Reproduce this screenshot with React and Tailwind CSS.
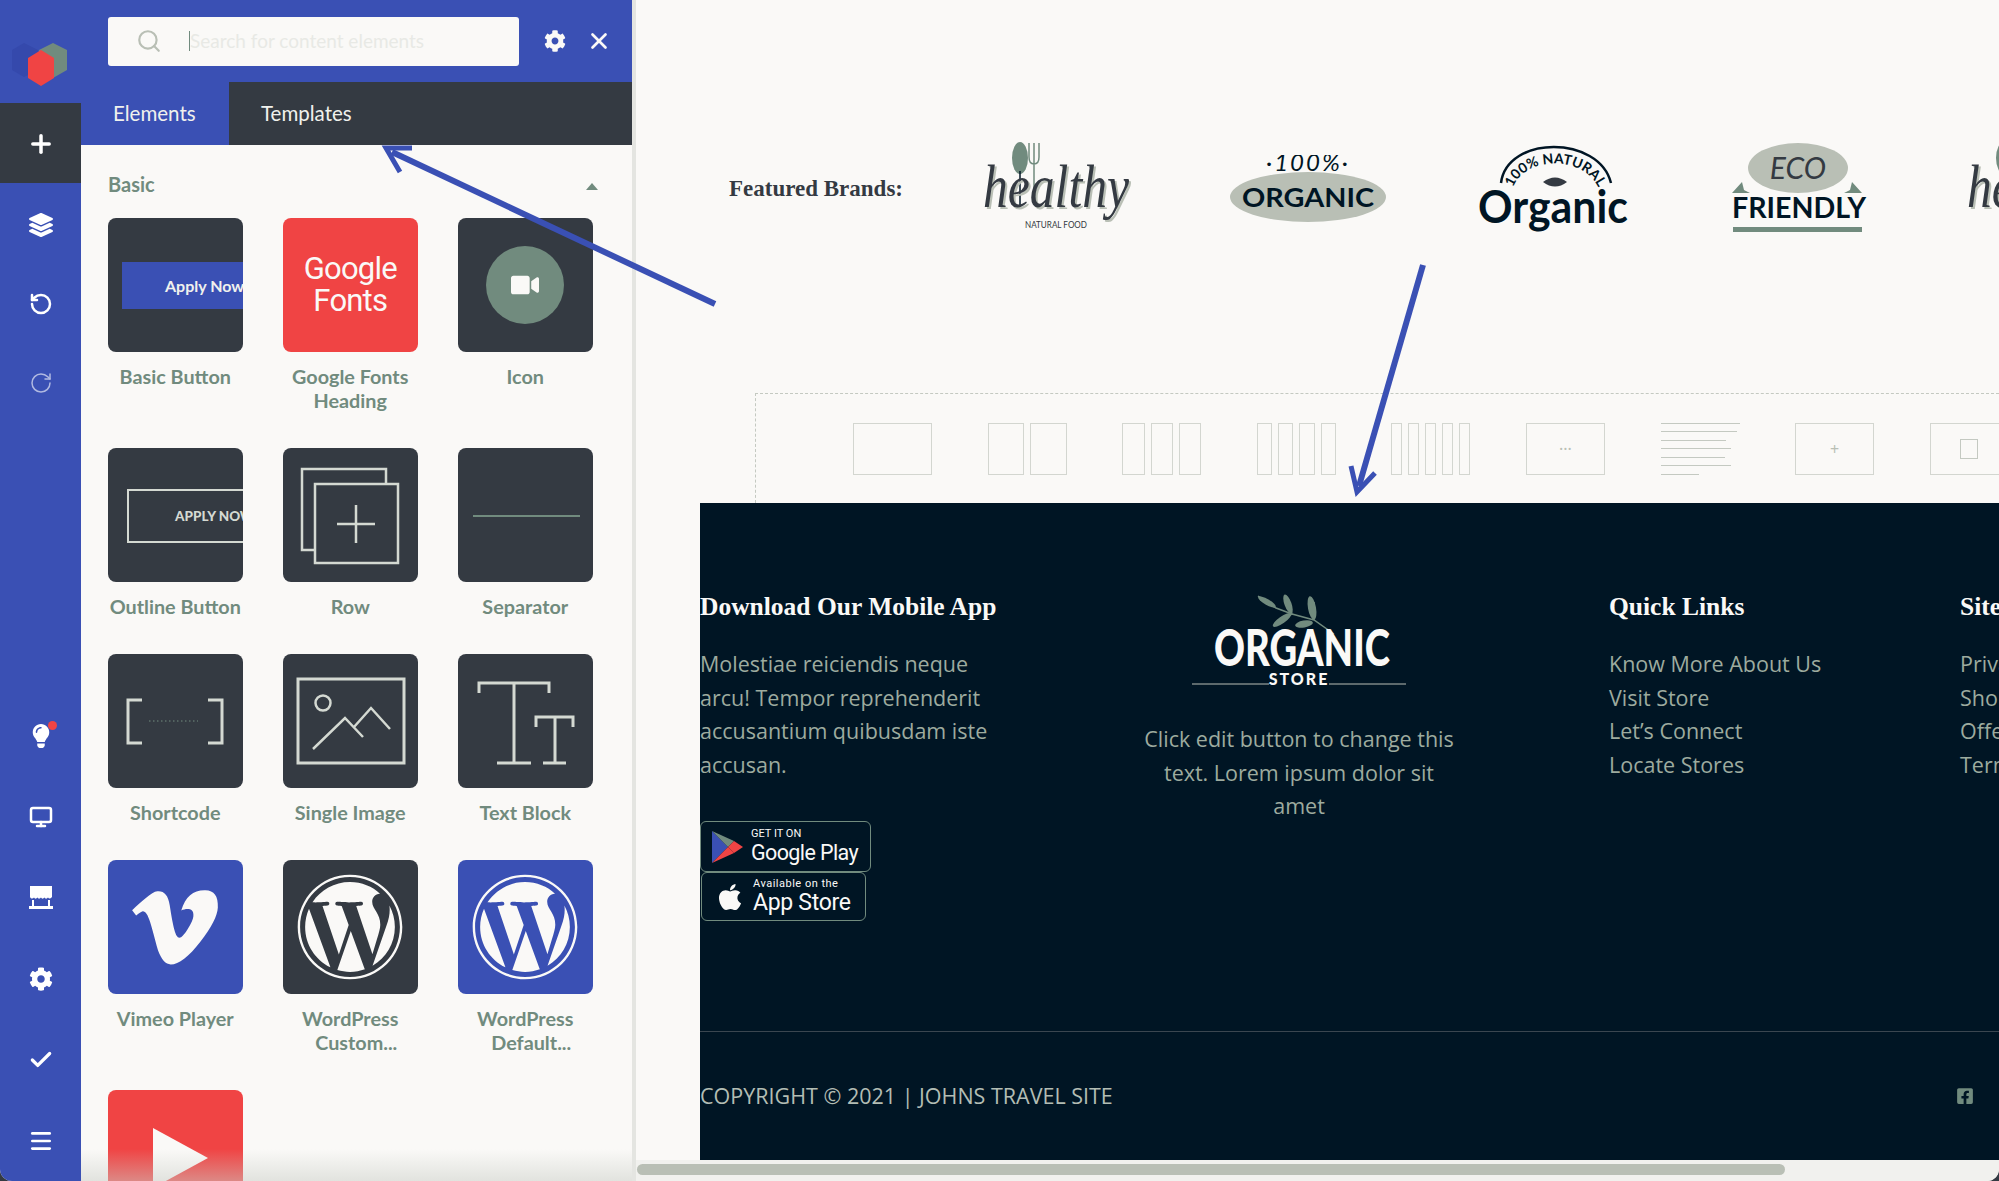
import React from 'react';
import { Plus, RotateCcw, RotateCw, Monitor, Check, Menu, Search, X } from 'lucide-react';
import { FaCog, FaLayerGroup, FaVideo, FaVimeoV, FaWordpress, FaApple, FaFacebookSquare, FaLightbulb } from 'react-icons/fa';

const Store = () => (
    <svg width="24" height="24" viewBox="0 0 24 24" fill="#ffffff">
        <path d="M1 0h22v11c-2 2-3 2-4 .5-1 1.500-3 1.500-3.500 0-1 1.500-3 1.500-3.500 0-1 1.500-3 1.500-3.500 0-1 1.500-3 1.500-3.500 0-1 1.500-3 1.500-4-.5z" />
        <rect x="3" y="14" width="2" height="6" />
        <rect x="19" y="14" width="2" height="6" />
        <rect x="0" y="20" width="24" height="3" />
    </svg>
);

const Logo = () => (
    <svg width="60" height="46" viewBox="0 0 60 46" className="mt-[41px] ml-[10px]">
        <path d="M14 2l14 7v20l-14 7-12-7V9z" fill="#3549ac" />
        <path d="M43 2l14 7v20l-14 8-14-8V9z" fill="#718b7e" />
        <path d="M31 9l13 8v20l-13 8-13-8V17z" fill="#f04444" />
    </svg>
);

const Tile = ({ bg = 'bg-[#343a42]', children }) => (
    <div className={`w-[134.5px] h-[134px] rounded-lg overflow-hidden relative flex items-center justify-center ${bg}`}>
        {children}
    </div>
);

const Draw = ({ children }) => (
    <svg width="135" height="134" viewBox="0 0 135 134" fill="none" stroke="#d4d9d2" strokeWidth="2.500" className="shrink-0">
        {children}
    </svg>
);

const tiles = [
    {
        label: ['Basic Button'],
        node: (
            <Tile>
                <div className="absolute left-[14px] top-[44px] w-[121px] h-[47px] bg-[#3a50b4] flex items-center pl-[43px] whitespace-nowrap text-[#f0f1ed] text-[16px] font-bold">
                    Apply Now
                </div>
            </Tile>
        ),
    },
    {
        label: ['Google Fonts', 'Heading'],
        node: (
            <Tile bg="bg-[#f04444]">
                <div className="text-[#faf9f7] text-center font-['Roboto'] text-[31px] leading-[32px] tracking-[-0.8px]">
                    Google
                    <br />
                    Fonts
                </div>
            </Tile>
        ),
    },
    {
        label: ['Icon'],
        node: (
            <Tile>
                <div className="w-[78px] h-[78px] rounded-full bg-[#718b7e] flex items-center justify-center">
                    <FaVideo size={28} color="#faf9f7" />
                </div>
            </Tile>
        ),
    },
    {
        label: ['Outline Button'],
        node: (
            <Tile>
                <div className="absolute left-[19px] top-[41px] w-[120px] h-[54px] border-2 border-[#d4d9d2] flex items-center pl-[46px] whitespace-nowrap text-[#d4d9d2] text-[13.500px] font-black">
                    APPLY NOW
                </div>
            </Tile>
        ),
    },
    {
        label: ['Row'],
        node: (
            <Tile>
                <Draw>
                    <path d="M31 102H19V21h84v15" />
                    <rect x="32" y="36" width="83" height="79" />
                    <path d="M73 57v38M54 76h38" />
                </Draw>
            </Tile>
        ),
    },
    {
        label: ['Separator'],
        node: (
            <Tile>
                <Draw>
                    <path d="M15 68h107" stroke="#718b7e" strokeWidth="2" />
                </Draw>
            </Tile>
        ),
    },
    {
        label: ['Shortcode'],
        node: (
            <Tile>
                <Draw>
                    <path d="M34 46H20v43h14M100 46h14v43h-14" strokeWidth="3" />
                    <path d="M41 67h49" strokeWidth="1" strokeDasharray="1.500 2.500" stroke="#718b7e" />
                </Draw>
            </Tile>
        ),
    },
    {
        label: ['Single Image'],
        node: (
            <Tile>
                <Draw>
                    <rect x="15" y="25" width="106" height="84" strokeWidth="3" />
                    <circle cx="40" cy="49" r="7.500" />
                    <path d="M30 95l32-31 18 19M71 73l17-19 19 21" />
                </Draw>
            </Tile>
        ),
    },
    {
        label: ['Text Block'],
        node: (
            <Tile>
                <Draw>
                    <path d="M21 39V29h70v10M56 29v80M39 109h34M78 73V63h37v10M97 63v46M85 109h23" strokeWidth="3" />
                </Draw>
            </Tile>
        ),
    },
    {
        label: ['Vimeo Player'],
        node: (
            <Tile bg="bg-[#3a50b4]">
                <FaVimeoV size={98} color="#faf9f7" />
            </Tile>
        ),
    },
    {
        label: ['WordPress', 'Custom...'],
        indent: true,
        node: (
            <Tile>
                <FaWordpress size={108} color="#faf9f7" />
            </Tile>
        ),
    },
    {
        label: ['WordPress', 'Default...'],
        indent: true,
        node: (
            <Tile bg="bg-[#3a50b4]">
                <FaWordpress size={108} color="#faf9f7" />
            </Tile>
        ),
    },
    {
        label: [],
        node: (
            <Tile bg="bg-[#f04444]">
                <svg width="135" height="134" viewBox="0 0 135 134" className="shrink-0">
                    <path d="M45 38l55 30-55 30z" fill="#faf9f7" />
                </svg>
            </Tile>
        ),
    },
];

const Sidebar = () => (
    <div className="w-[81px] h-full bg-[#3a50b4] flex flex-col text-white shrink-0">
        <div className="h-[103px]">
            <Logo />
        </div>
        <div className="h-[80px] pt-[1px] bg-[#343a42] flex items-center justify-center">
            <Plus size={28} strokeWidth={3} />
        </div>
        <div className="h-[80px] pt-[3px] flex items-center justify-center">
            <FaLayerGroup size={24} />
        </div>
        <div className="h-[80px] pt-[2px] flex items-center justify-center">
            <RotateCcw size={24} strokeWidth={2.5} />
        </div>
        <div className="h-[80px] flex items-center justify-center">
            <RotateCw size={24} strokeWidth={1.5} className="opacity-60" />
        </div>
        <div className="mt-auto flex flex-col">
            <div className="h-[81px] flex items-center justify-center relative">
                <FaLightbulb size={24} />
                <span className="absolute left-[48px] top-[26px] w-[9px] h-[9px] rounded-full bg-[#f04444]"></span>
            </div>
            <div className="h-[81px] flex items-center justify-center">
                <Monitor size={24} strokeWidth={2.5} />
            </div>
            <div className="h-[81px] flex items-center justify-center">
                <Store />
            </div>
            <div className="h-[81px] flex items-center justify-center">
                <FaCog size={24} />
            </div>
            <div className="h-[81px] flex items-center justify-center">
                <Check size={26} strokeWidth={3} />
            </div>
            <div className="h-[81px] flex items-center justify-center">
                <Menu size={26} strokeWidth={2.5} />
            </div>
        </div>
    </div>
);

const Panel = () => (
    <div className="w-[636px] h-full flex shrink-0 border-r-4 border-[#e4e5e1] font-['Lato']">
        <Sidebar />
        <div className="flex-1 flex flex-col min-w-0">
            <div className="h-[82px] bg-[#3a50b4] flex items-center pl-[27px] shrink-0">
                <div className="w-[411px] h-[49px] bg-[#faf9f7] rounded-[3px] flex items-center pl-[28px]">
                    <Search size={26} strokeWidth={2} color="#b9bfb5" />
                    <span className="ml-[27px] h-[20px] w-px bg-[#718b7e]"></span>
                    <span className="text-[19px] text-[#e8e9e5]">Search for content elements</span>
                </div>
                <FaCog size={22} color="#faf9f7" className="ml-[25px]" />
                <X size={26} strokeWidth={2.5} color="#faf9f7" className="ml-[20px]" />
            </div>
            <div className="h-[63px] flex shrink-0 bg-[#343a42] text-[20.500px] text-[#f0f1ed]">
                <div className="w-[148px] bg-[#3a50b4] flex items-center pl-[32px]">Elements</div>
                <div className="flex items-center pl-[32px]">Templates</div>
            </div>
            <div className="flex-1 relative overflow-hidden bg-[#faf9f7] pl-[27px] pt-[27px]">
                <div className="flex items-center justify-between w-[497px] h-[24px] mb-[22px] pr-[7px]">
                    <span className="text-[20px] font-bold text-[#718b7e]">Basic</span>
                    <span className="w-0 h-0 border-x-[6px] border-x-transparent border-b-[7px] border-b-[#718b7e] mt-1"></span>
                </div>
                <div className="grid grid-cols-[134.5px_134.5px_134.5px] gap-x-[40.500px] gap-y-[36px]">
                    {tiles.map((tile, i) => (
                        <div key={i}>
                            {tile.node}
                            <div className="mt-[12px] text-center text-[19.800px] leading-[24px] font-bold text-[#718b7e] whitespace-nowrap">
                                {tile.label.map((line, n) => (
                                    <div key={n} className={tile.indent && n === 1 ? 'pl-[12px]' : ''}>{line}</div>
                                ))}
                            </div>
                        </div>
                    ))}
                </div>
                <div className="absolute left-0 right-0 bottom-0 h-[32px] bg-gradient-to-b from-[#faf9f7]/0 to-[#c9cdc6]/50"></div>
            </div>
        </div>
    </div>
);

const Healthy = () => (
    <svg width="160" height="96" viewBox="0 0 160 96" fill="none" className="shrink-0">
        <ellipse cx="38" cy="17" rx="8" ry="16" fill="#718b7e" />
        <path d="M38 30v36" stroke="#001524" strokeWidth="1.500" />
        <path d="M47 2v14q0 7 5 7t5-7V2M52 2v60" stroke="#718b7e" strokeWidth="1.500" />
        <text x="3" y="68" fontFamily="Liberation Serif" fontStyle="italic" fontSize="62" fill="#b9bfb5" textLength="146" lengthAdjust="spacingAndGlyphs">healthy</text>
        <text x="1" y="66" fontFamily="Liberation Serif" fontStyle="italic" fontSize="62" fill="#343a42" textLength="146" lengthAdjust="spacingAndGlyphs">healthy</text>
        <text x="43" y="87" fontFamily="Lato" fontSize="9" fill="#343a42" textLength="62" lengthAdjust="spacingAndGlyphs">NATURAL FOOD</text>
    </svg>
);

const Pill = () => (
    <svg width="160" height="68" viewBox="0 0 160 68" className="shrink-0">
        <ellipse cx="80" cy="42" rx="78" ry="25" fill="#b9bfb5" />
        <text x="80" y="16" textAnchor="middle" fontFamily="Lato" fontStyle="italic" fontSize="24" letterSpacing="2" fill="#001524">·100%·</text>
        <text x="80" y="52" textAnchor="middle" fontFamily="Lato" fontWeight="700" fontSize="27" fill="#001524" textLength="132" lengthAdjust="spacingAndGlyphs">ORGANIC</text>
    </svg>
);

const Natural = () => (
    <svg width="154" height="88" viewBox="0 0 154 88" fill="none" className="shrink-0">
        <path d="M24 38C30 -10 122 -10 134 38" stroke="#001524" strokeWidth="2.500" />
        <path id="natArc" d="M34 50C40 8 114 8 124 50" />
        <text fontFamily="Lato" fontWeight="700" fontSize="14" fill="#001524" textAnchor="middle">
            <textPath href="#natArc" startOffset="50%">100% NATURAL</textPath>
        </text>
        <path d="M66 37q12-9 24 0q-12 9-24 0z" fill="#343a42" />
        <text x="76" y="78" textAnchor="middle" fontFamily="Lato" fontWeight="700" fontSize="46" fill="#001524" textLength="150" lengthAdjust="spacingAndGlyphs">Organic</text>
    </svg>
);

const Eco = () => (
    <svg width="136" height="92" viewBox="0 0 136 92" className="shrink-0">
        <ellipse cx="66" cy="25" rx="50" ry="25" fill="#b9bfb5" />
        <path d="M0 50l10-11 2 8 6 3zM130 50l-10-11-2 8-6 3z" fill="#718b7e" />
        <text x="66" y="36" textAnchor="middle" fontFamily="Lato" fontStyle="italic" fontSize="30" fill="#343a42">ECO</text>
        <text x="67" y="75" textAnchor="middle" fontFamily="Lato" fontWeight="700" fontSize="29" fill="#001524" textLength="134" lengthAdjust="spacingAndGlyphs">FRIENDLY</text>
        <rect x="1" y="84" width="129" height="5" fill="#718b7e" />
    </svg>
);

const Cols = ({ n }) => (
    <div className="w-[79px] h-[52px] flex gap-[6px] shrink-0">
        {Array.from({ length: n }).map((_, i) => (
            <div key={i} className="flex-1 border border-[#d3d6d0]"></div>
        ))}
    </div>
);

const BoxIcon = ({ children }) => (
    <div className="w-[79px] h-[52px] border border-[#d3d6d0] flex items-center justify-center shrink-0 text-[#b9bfb5] text-[16px] leading-none">
        {children}
    </div>
);

const TextLines = () => (
    <div className="w-[79px] h-[52px] flex flex-col justify-between shrink-0">
        {[79, 76, 65, 70, 64, 70, 38].map((w, i) => (
            <div key={i} className="h-px bg-[#c4c9c1]" style={{ width: w }}></div>
        ))}
    </div>
);

const DropArea = () => (
    <div className="ml-[55px] h-[110px] border-l border-t border-dashed border-[#c4c9c1] flex items-center gap-[55.600px] pl-[97px] overflow-hidden">
        <Cols n={1} />
        <Cols n={2} />
        <Cols n={3} />
        <Cols n={4} />
        <Cols n={5} />
        <BoxIcon>···</BoxIcon>
        <TextLines />
        <BoxIcon>+</BoxIcon>
        <BoxIcon>
            <div className="w-[18px] h-[20px] border border-[#c4c9c1]"></div>
        </BoxIcon>
    </div>
);

const PlayBadge = () => (
    <div className="w-[171px] h-[51px] border border-[#718b7e] rounded-[6px] flex items-center pl-[10px] bg-[#001524]">
        <svg width="32" height="34" viewBox="0 0 32 34">
            <path d="M1 1v32l16-16z" fill="#3a50b4" />
            <path d="M1 1l16 16 6-6z" fill="#718b7e" />
            <path d="M1 33l16-16 6 6z" fill="#f04444" />
            <path d="M23 11l9 6-9 6-6-6z" fill="#f04444" />
        </svg>
        <div className="ml-[8px] text-[#faf9f7] font-['Roboto']">
            <div className="text-[11px] leading-[12px]">GET IT ON</div>
            <div className="text-[21.500px] leading-[25px] tracking-[-0.6px]">Google Play</div>
        </div>
    </div>
);

const AppBadge = () => (
    <div className="w-[165px] h-[49px] ml-px border border-[#718b7e] rounded-[6px] flex items-center pl-[13px] bg-[#001524]">
        <FaApple size={30} color="#faf9f7" />
        <div className="ml-[8px] text-[#faf9f7] font-['Roboto']">
            <div className="text-[11px] leading-[12px] tracking-[0.5px]">Available on the</div>
            <div className="text-[23px] leading-[26px] tracking-[-0.3px]">App Store</div>
        </div>
    </div>
);

const StoreLogo = () => (
    <svg width="214" height="100" viewBox="0 0 214 100" fill="none">
        <path d="M66 6l18 12 16 6 22 6 20 14M100 24L96 8M122 30V12M100 24l-18 12" stroke="#718b7e" strokeWidth="1.500" />
        <ellipse cx="75" cy="12" rx="10" ry="3" fill="#718b7e" transform="rotate(30 75 12)" />
        <ellipse cx="96" cy="14" rx="10" ry="3.500" fill="#718b7e" transform="rotate(70 96 14)" />
        <ellipse cx="90" cy="30" rx="11" ry="3.500" fill="#718b7e" transform="rotate(-35 90 30)" />
        <ellipse cx="120" cy="18" rx="12" ry="4" fill="#718b7e" transform="rotate(80 120 18)" />
        <ellipse cx="112" cy="34" rx="9" ry="3.500" fill="#718b7e" transform="rotate(-10 112 34)" />
        <text x="22" y="76" fontFamily="Lato" fontWeight="900" fontSize="52" fill="#faf9f7" textLength="176" lengthAdjust="spacingAndGlyphs">ORGANIC</text>
        <text x="107" y="95" textAnchor="middle" fontFamily="Lato" fontWeight="900" fontSize="16" fill="#faf9f7" letterSpacing="2">STORE</text>
        <path d="M0 94h77M137 94h77" stroke="#b9bfb5" strokeWidth="1" />
    </svg>
);

const Heading = ({ children }) => (
    <h3 className="font-['Liberation_Serif'] font-bold text-[25.500px] leading-[34px] text-[#faf9f7] whitespace-nowrap mb-[23px]">
        {children}
    </h3>
);

const Links = ({ items }) => (
    <ul className="text-[21.500px] leading-[33.500px] text-[#9dab9f] whitespace-nowrap">
        {items.map((item) => (
            <li key={item}>{item}</li>
        ))}
    </ul>
);

const Footer = () => (
    <div className="h-[657px] bg-[#001524] font-['Open_Sans'] flex flex-col shrink-0">
        <div className="h-[529px] border-b border-[#3a4650] flex pt-[87px] shrink-0">
            <div className="w-[424px] shrink-0">
                <div className="w-[310px]">
                    <Heading>Download Our Mobile App</Heading>
                    <p className="text-[21.500px] leading-[33.500px] text-[#9dab9f]">
                        Molestiae reiciendis neque arcu! Tempor reprehenderit accusantium quibusdam iste accusan.
                    </p>
                    <div className="mt-[40px] flex flex-col">
                        <PlayBadge />
                        <AppBadge />
                    </div>
                </div>
            </div>
            <div className="w-[350px] shrink-0 flex flex-col items-center">
                <StoreLogo />
                <p className="mt-[32px] w-[316px] text-center text-[21.500px] leading-[33.500px] text-[#9dab9f]">
                    Click edit button to change this text. Lorem ipsum dolor sit amet
                </p>
            </div>
            <div className="w-[351px] ml-[135px] shrink-0">
                <Heading>Quick Links</Heading>
                <Links items={['Know More About Us', 'Visit Store', 'Let’s Connect', 'Locate Stores']} />
            </div>
            <div className="shrink-0">
                <Heading>Site Map</Heading>
                <Links items={['Privacy', 'Shop', 'Offers', 'Terms']} />
            </div>
        </div>
        <div className="flex-1 flex items-center justify-between pr-[25px]">
            <span className="text-[21.500px] text-[#b3bdb4]">COPYRIGHT © 2021 | JOHNS TRAVEL SITE</span>
            <FaFacebookSquare size={18} color="#718b7e" />
        </div>
    </div>
);

const Arrows = () => (
    <svg className="absolute inset-0 pointer-events-none" width="1999" height="1181" viewBox="0 0 1999 1181" fill="none" stroke="#3a50b4">
        <path d="M715 304L392 152" strokeWidth="6" />
        <path d="M412 148H386l14 24" strokeWidth="5" />
        <path d="M1423 265Q1390 380 1359 486" strokeWidth="6" />
        <path d="M1351 466l6 26 18-19" strokeWidth="5" />
    </svg>
);

export default function App() {
    return (
        <div className="w-[1999px] h-[1181px] bg-[#343a42]">
            <div className="w-full h-full relative flex overflow-hidden rounded-b-[12px] bg-[#faf9f7]">
                <Panel />
                <div className="flex-1 min-w-0 overflow-hidden flex flex-col pl-[64px]">
                    <div className="h-[393px] pt-[143px] pl-[29px] flex items-start shrink-0 overflow-hidden">
                        <div className="w-[210px] h-[92px] shrink-0 flex items-center">
                            <span className="font-['Liberation_Serif'] font-bold text-[23px] text-[#343a42] whitespace-nowrap">Featured Brands:</span>
                        </div>
                        {[<Healthy />, <Pill />, <Natural />, <Eco />, <Healthy />].map((logo, i) => (
                            <div key={i} className="w-[246px] h-[92px] shrink-0 flex items-center justify-center">
                                {logo}
                            </div>
                        ))}
                    </div>
                    <DropArea />
                    <Footer />
                    <div className="flex-1 -ml-[64px] pt-[4px] bg-[#f1f1ee]">
                        <div className="ml-[1px] w-[1148px] h-[11px] rounded-full bg-[#b9bfb5]"></div>
                    </div>
                </div>
                <Arrows />
            </div>
        </div>
    );
}
